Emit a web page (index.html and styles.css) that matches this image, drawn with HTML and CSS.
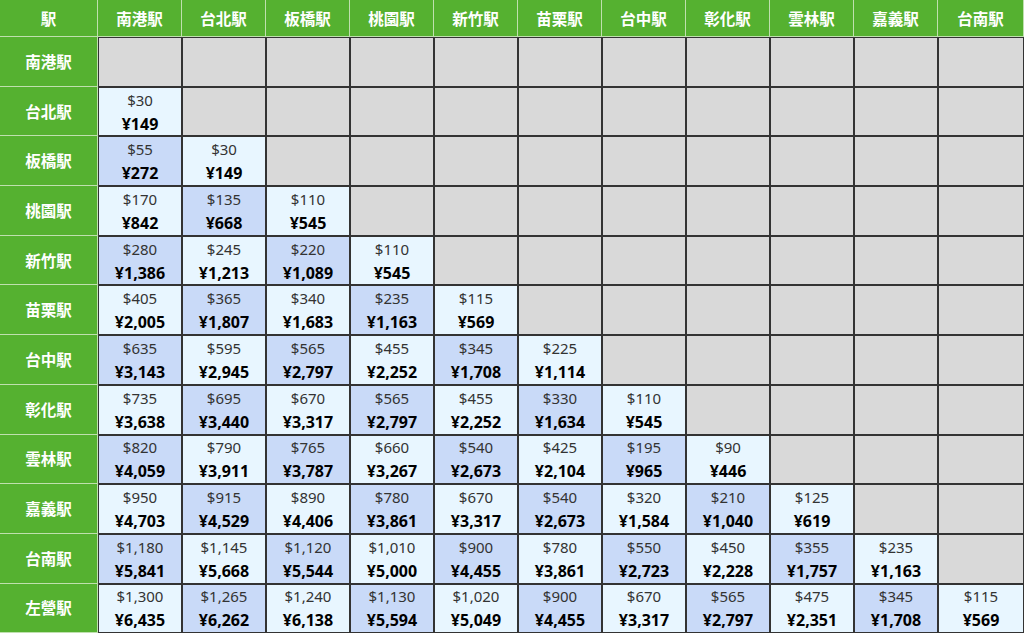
FILE: index.html
```html
<!DOCTYPE html>
<html lang="ja">
<head>
<meta charset="utf-8">
<title>運賃表</title>
<link rel="stylesheet" href="styles.css">
</head>
<body>
<div class="grid">
<div class="h">駅</div><div class="h">南港駅</div><div class="h">台北駅</div><div class="h">板橋駅</div><div class="h">桃園駅</div><div class="h">新竹駅</div><div class="h">苗栗駅</div><div class="h">台中駅</div><div class="h">彰化駅</div><div class="h">雲林駅</div><div class="h">嘉義駅</div><div class="h">台南駅</div>

<div class="h">南港駅</div><div class="c g"></div><div class="c g"></div><div class="c g"></div><div class="c g"></div><div class="c g"></div><div class="c g"></div><div class="c g"></div><div class="c g"></div><div class="c g"></div><div class="c g"></div><div class="c g"></div>

<div class="h">台北駅</div><div class="c l"><span class="u">$30</span><span class="y">¥149</span></div><div class="c g"></div><div class="c g"></div><div class="c g"></div><div class="c g"></div><div class="c g"></div><div class="c g"></div><div class="c g"></div><div class="c g"></div><div class="c g"></div><div class="c g"></div>

<div class="h">板橋駅</div><div class="c b"><span class="u">$55</span><span class="y">¥272</span></div><div class="c l"><span class="u">$30</span><span class="y">¥149</span></div><div class="c g"></div><div class="c g"></div><div class="c g"></div><div class="c g"></div><div class="c g"></div><div class="c g"></div><div class="c g"></div><div class="c g"></div><div class="c g"></div>

<div class="h">桃園駅</div><div class="c l"><span class="u">$170</span><span class="y">¥842</span></div><div class="c b"><span class="u">$135</span><span class="y">¥668</span></div><div class="c l"><span class="u">$110</span><span class="y">¥545</span></div><div class="c g"></div><div class="c g"></div><div class="c g"></div><div class="c g"></div><div class="c g"></div><div class="c g"></div><div class="c g"></div><div class="c g"></div>

<div class="h">新竹駅</div><div class="c b"><span class="u">$280</span><span class="y">¥1,386</span></div><div class="c l"><span class="u">$245</span><span class="y">¥1,213</span></div><div class="c b"><span class="u">$220</span><span class="y">¥1,089</span></div><div class="c l"><span class="u">$110</span><span class="y">¥545</span></div><div class="c g"></div><div class="c g"></div><div class="c g"></div><div class="c g"></div><div class="c g"></div><div class="c g"></div><div class="c g"></div>

<div class="h">苗栗駅</div><div class="c l"><span class="u">$405</span><span class="y">¥2,005</span></div><div class="c b"><span class="u">$365</span><span class="y">¥1,807</span></div><div class="c l"><span class="u">$340</span><span class="y">¥1,683</span></div><div class="c b"><span class="u">$235</span><span class="y">¥1,163</span></div><div class="c l"><span class="u">$115</span><span class="y">¥569</span></div><div class="c g"></div><div class="c g"></div><div class="c g"></div><div class="c g"></div><div class="c g"></div><div class="c g"></div>

<div class="h">台中駅</div><div class="c b"><span class="u">$635</span><span class="y">¥3,143</span></div><div class="c l"><span class="u">$595</span><span class="y">¥2,945</span></div><div class="c b"><span class="u">$565</span><span class="y">¥2,797</span></div><div class="c l"><span class="u">$455</span><span class="y">¥2,252</span></div><div class="c b"><span class="u">$345</span><span class="y">¥1,708</span></div><div class="c l"><span class="u">$225</span><span class="y">¥1,114</span></div><div class="c g"></div><div class="c g"></div><div class="c g"></div><div class="c g"></div><div class="c g"></div>

<div class="h">彰化駅</div><div class="c l"><span class="u">$735</span><span class="y">¥3,638</span></div><div class="c b"><span class="u">$695</span><span class="y">¥3,440</span></div><div class="c l"><span class="u">$670</span><span class="y">¥3,317</span></div><div class="c b"><span class="u">$565</span><span class="y">¥2,797</span></div><div class="c l"><span class="u">$455</span><span class="y">¥2,252</span></div><div class="c b"><span class="u">$330</span><span class="y">¥1,634</span></div><div class="c l"><span class="u">$110</span><span class="y">¥545</span></div><div class="c g"></div><div class="c g"></div><div class="c g"></div><div class="c g"></div>

<div class="h">雲林駅</div><div class="c b"><span class="u">$820</span><span class="y">¥4,059</span></div><div class="c l"><span class="u">$790</span><span class="y">¥3,911</span></div><div class="c b"><span class="u">$765</span><span class="y">¥3,787</span></div><div class="c l"><span class="u">$660</span><span class="y">¥3,267</span></div><div class="c b"><span class="u">$540</span><span class="y">¥2,673</span></div><div class="c l"><span class="u">$425</span><span class="y">¥2,104</span></div><div class="c b"><span class="u">$195</span><span class="y">¥965</span></div><div class="c l"><span class="u">$90</span><span class="y">¥446</span></div><div class="c g"></div><div class="c g"></div><div class="c g"></div>

<div class="h">嘉義駅</div><div class="c l"><span class="u">$950</span><span class="y">¥4,703</span></div><div class="c b"><span class="u">$915</span><span class="y">¥4,529</span></div><div class="c l"><span class="u">$890</span><span class="y">¥4,406</span></div><div class="c b"><span class="u">$780</span><span class="y">¥3,861</span></div><div class="c l"><span class="u">$670</span><span class="y">¥3,317</span></div><div class="c b"><span class="u">$540</span><span class="y">¥2,673</span></div><div class="c l"><span class="u">$320</span><span class="y">¥1,584</span></div><div class="c b"><span class="u">$210</span><span class="y">¥1,040</span></div><div class="c l"><span class="u">$125</span><span class="y">¥619</span></div><div class="c g"></div><div class="c g"></div>

<div class="h">台南駅</div><div class="c b"><span class="u">$1,180</span><span class="y">¥5,841</span></div><div class="c l"><span class="u">$1,145</span><span class="y">¥5,668</span></div><div class="c b"><span class="u">$1,120</span><span class="y">¥5,544</span></div><div class="c l"><span class="u">$1,010</span><span class="y">¥5,000</span></div><div class="c b"><span class="u">$900</span><span class="y">¥4,455</span></div><div class="c l"><span class="u">$780</span><span class="y">¥3,861</span></div><div class="c b"><span class="u">$550</span><span class="y">¥2,723</span></div><div class="c l"><span class="u">$450</span><span class="y">¥2,228</span></div><div class="c b"><span class="u">$355</span><span class="y">¥1,757</span></div><div class="c l"><span class="u">$235</span><span class="y">¥1,163</span></div><div class="c g"></div>

<div class="h">左營駅</div><div class="c l"><span class="u">$1,300</span><span class="y">¥6,435</span></div><div class="c b"><span class="u">$1,265</span><span class="y">¥6,262</span></div><div class="c l"><span class="u">$1,240</span><span class="y">¥6,138</span></div><div class="c b"><span class="u">$1,130</span><span class="y">¥5,594</span></div><div class="c l"><span class="u">$1,020</span><span class="y">¥5,049</span></div><div class="c b"><span class="u">$900</span><span class="y">¥4,455</span></div><div class="c l"><span class="u">$670</span><span class="y">¥3,317</span></div><div class="c b"><span class="u">$565</span><span class="y">¥2,797</span></div><div class="c l"><span class="u">$475</span><span class="y">¥2,351</span></div><div class="c b"><span class="u">$345</span><span class="y">¥1,708</span></div><div class="c l"><span class="u">$115</span><span class="y">¥569</span></div>
</div>
</body>
</html>
```

FILE: styles.css
```css
* { box-sizing: border-box; }
html, body { margin: 0; padding: 0; background: #fff; }
body {
  font-family: "Noto Sans", "Noto Sans CJK JP", sans-serif;
  width: 1024px;
  height: 633px;
  overflow: hidden;
}
.grid {
  display: grid;
  grid-template-columns: 98px repeat(10, 84px) 1fr;
  grid-template-rows: 37px repeat(12, 49.7px);
  width: 1024px;
}
.h {
  background: #55b130;
  color: #fff;
  font-weight: 700;
  font-size: 15.5px;
  display: flex;
  align-items: center;
  justify-content: center;
  border-right: 1px solid #bfe0ae;
  border-bottom: 1px solid #bfe0ae;
}
.c {
  border: 1px solid #333;
  display: flex;
  flex-direction: column;
  align-items: center;
  justify-content: center;
  line-height: 24px;
}
.g { background: #d9d9d9; }
.l { background: #e8f6ff; }
.b { background: #c9daf8; }
.u {
  font-size: 15px;
  color: #333;
}
.y {
  font-size: 16px;
  font-weight: 700;
  color: #000;
}
```
